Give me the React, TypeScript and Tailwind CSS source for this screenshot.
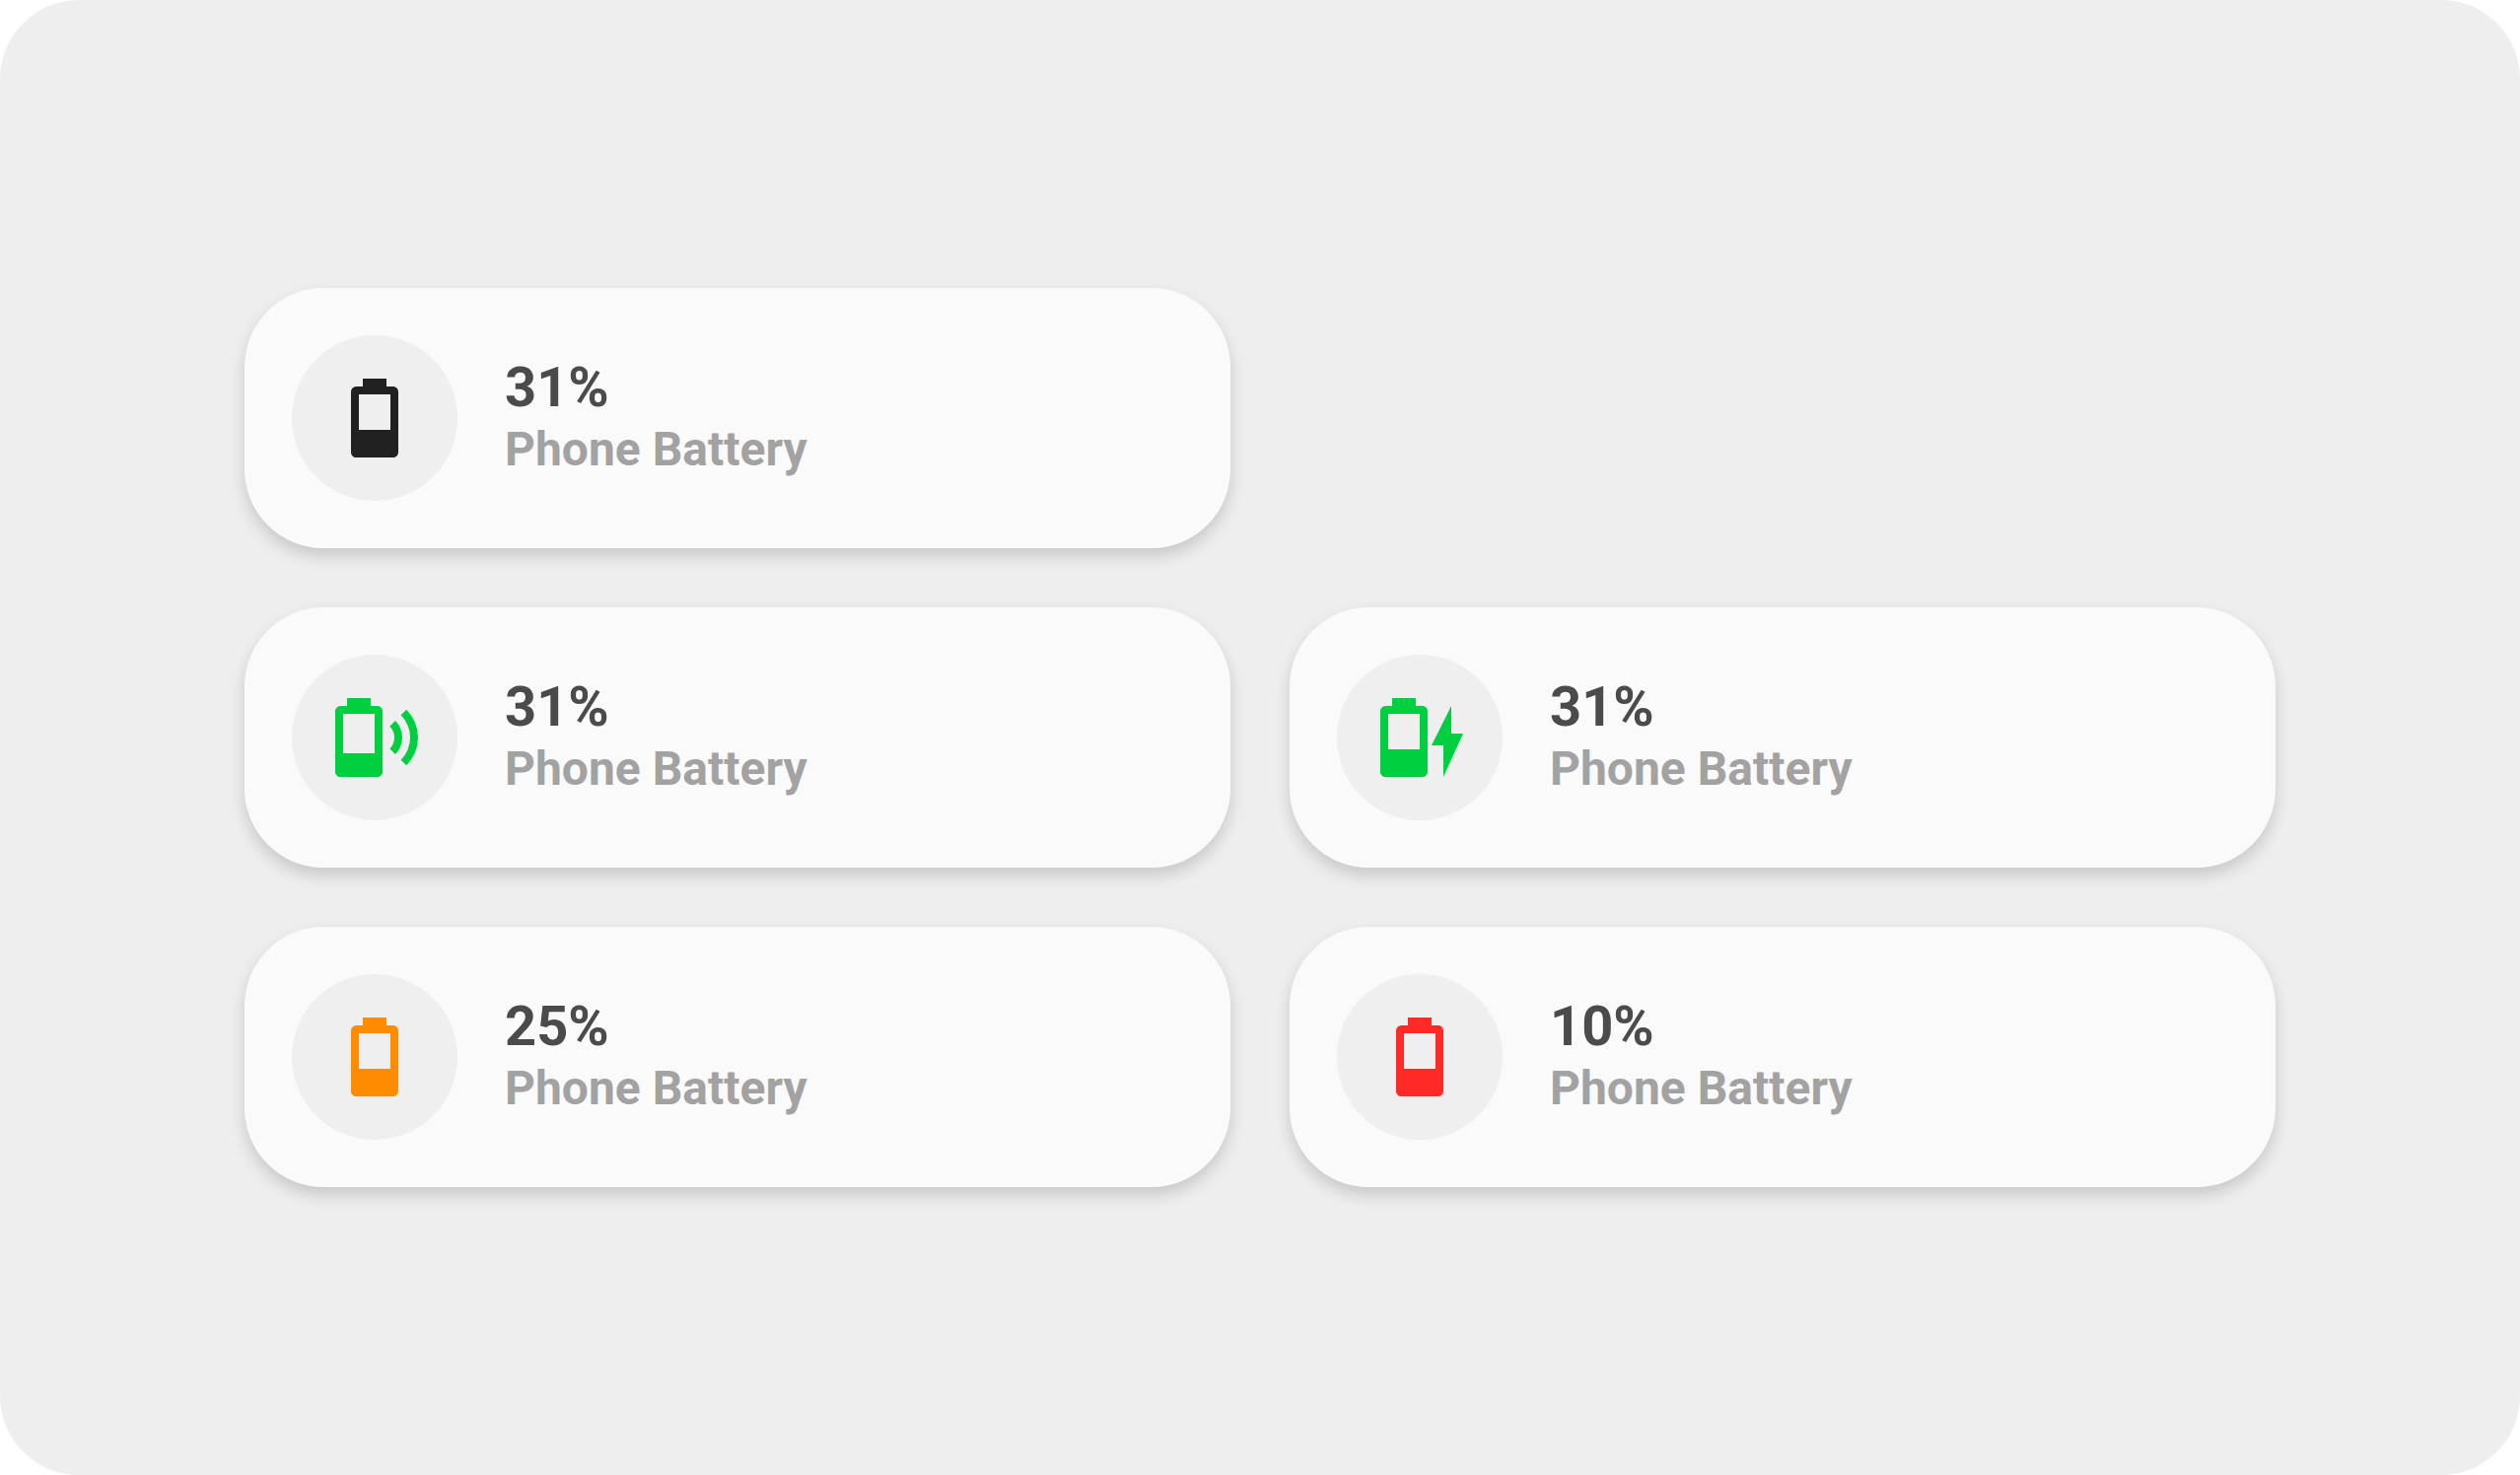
type IconKind = "battery" | "wireless" | "charging"

type Battery = {
    level: string
    icon: IconKind
    color: string
    place: string
}

const batteries: Battery[] = [
    { level: "31%", icon: "battery", color: "text-[#212121]", place: "col-start-1" },
    { level: "31%", icon: "wireless", color: "text-[#00d03f]", place: "col-start-1" },
    { level: "31%", icon: "charging", color: "text-[#00d03f]", place: "col-start-2" },
    { level: "25%", icon: "battery", color: "text-[#ff8c00]", place: "col-start-1" },
    { level: "10%", icon: "battery", color: "text-[#ff2a25]", place: "col-start-2" },
]

const paths: Record<IconKind, string> = {
    battery: "M16,15H8V6H16M16.67,4H15V2H9V4H7.33A1.33,1.33 0 0,0 6,5.33V20.67C6,21.4 6.6,22 7.33,22H16.67A1.33,1.33 0 0,0 18,20.67V5.33C18,4.6 17.4,4 16.67,4Z",
    wireless: "M12,16H4V6H12M12.67,4H11V2H5V4H3.33A1.33,1.33 0 0,0 2,5.33V20.67C2,21.4 2.6,22 3.33,22H12.67A1.33,1.33 0 0,0 14,20.67V5.33C14,4.6 13.4,4 12.67,4M17.24,7.76L15.83,9.17A4,4 0 0,1 15.83,14.83L17.24,16.24A6,6 0 0,0 17.24,7.76M20.07,4.93L18.66,6.34A8,8 0 0,1 18.66,17.66L20.07,19.07A10,10 0 0,0 20.07,4.93Z",
    charging: "M12,15H4V6H12M12.67,4H11V2H5V4H3.33A1.33,1.33 0 0,0 2,5.33V20.67C2,21.4 2.6,22 3.33,22H12.67A1.33,1.33 0 0,0 14,20.67V5.33C14,4.6 13.4,4 12.67,4M23,11H20V4L15,14H18V22Z",
}

function BatteryCard({ level, icon, color, place }: Battery) {
    return <div className={`${place} flex items-center gap-12 rounded-[80px] bg-[#fafafa] p-12 shadow-[0_8px_16px_0_rgba(0,0,0,0.16)]`}>
        <div className={`${color} flex size-42 shrink-0 items-center justify-center rounded-full bg-[#efefef]`}>
            <svg className="size-24" viewBox="0 0 24 24" fill="currentColor" fillRule="evenodd" aria-hidden="true">
                <path d={paths[icon]} />
            </svg>
        </div>
        <div className="font-bold">
            <p className="text-[56px] leading-[64px] text-[#4b4b4b]">{level}</p>
            <p className="text-[48px] leading-[62px] text-[#a2a2a2]">Phone Battery</p>
        </div>
    </div>
}

export default function App() {
    return <div className="min-h-screen bg-white font-[Roboto,sans-serif]">
        <main className="flex min-h-screen flex-col justify-center rounded-[80px] bg-[#eeeeee] px-62">
            <div className="grid grid-cols-2 gap-15">
                {batteries.map((battery, i) => <BatteryCard key={i} {...battery} />)}
            </div>
        </main>
    </div>
}
